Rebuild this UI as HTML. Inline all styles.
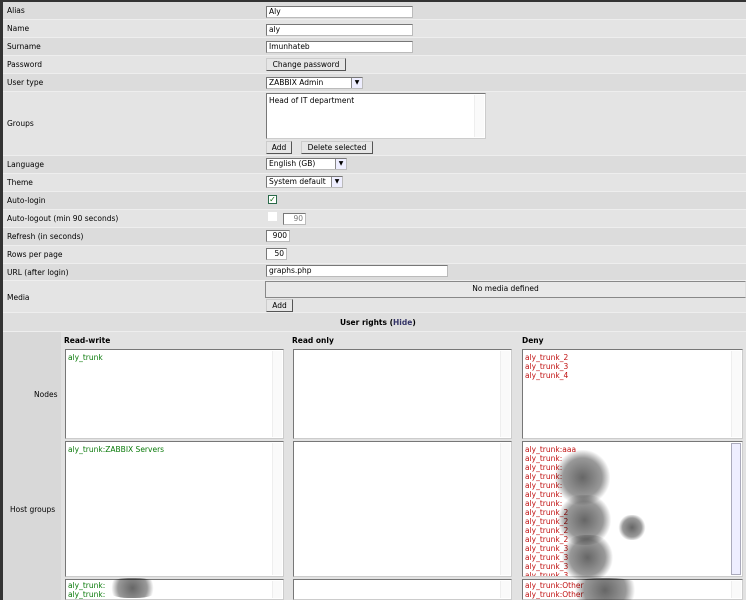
<!DOCTYPE html>
<html><head><meta charset="utf-8"><style>
*{box-sizing:border-box;margin:0;padding:0}
html,body{width:746px;height:600px;overflow:hidden}
body{background:#333;font-family:"DejaVu Sans","Liberation Sans",sans-serif;font-size:7.5px;color:#000;position:relative}
.a{position:absolute}
.row{position:absolute;left:3px;width:743px;border-bottom:1px solid #eeeeee}
.l{position:absolute;left:4px}
.in{position:absolute;background:#fff;border:1px solid #777;border-right-color:#bbb;border-bottom-color:#bbb;padding-left:2px;line-height:10px;height:12px}
.btn{position:absolute;background:#e6e6e6;border:1px solid #555;border-top-color:#ccc;border-left-color:#ccc;height:13px;line-height:11px;text-align:center}
.sel .arr{position:absolute;right:0;top:0;width:11px;height:10px;border-left:1px solid #888;background:#eef;text-align:center;font-size:6px;line-height:10px}
.box{position:absolute;background:#fff;border:1px solid #777;border-right-color:#ccc;border-bottom-color:#ccc;padding:3px 2px;line-height:9px;overflow:hidden}
.sb{position:absolute;right:1px;top:1px;bottom:1px;width:10px;background:#fafafa;border-left:1px solid #eee}
.g{color:#0a7a0a}.r{color:#c01010}
.blob{position:absolute;border-radius:45%;background:radial-gradient(circle,rgba(0,0,0,.6) 0,rgba(0,0,0,.4) 50%,rgba(0,0,0,0) 72%)}
</style></head><body>
<div class="a" style="left:3px;top:2px;width:743px;height:598px;background:#e2e2e2"></div>
<div class="row" style="top:2px;height:18px;background:#dcdcdc"><span class="l" style="top:4px">Alias</span></div>
<div class="row" style="top:20px;height:18px;background:#e4e4e4"><span class="l" style="top:4px">Name</span></div>
<div class="row" style="top:38px;height:18px;background:#dcdcdc"><span class="l" style="top:4px">Surname</span></div>
<div class="row" style="top:56px;height:18px;background:#e4e4e4"><span class="l" style="top:4px">Password</span></div>
<div class="row" style="top:74px;height:18px;background:#dcdcdc"><span class="l" style="top:4px">User type</span></div>
<div class="row" style="top:92px;height:64px;background:#e4e4e4"><span class="l" style="top:27px">Groups</span></div>
<div class="row" style="top:156px;height:18px;background:#dcdcdc"><span class="l" style="top:4px">Language</span></div>
<div class="row" style="top:174px;height:18px;background:#e4e4e4"><span class="l" style="top:4px">Theme</span></div>
<div class="row" style="top:192px;height:18px;background:#dcdcdc"><span class="l" style="top:4px">Auto-login</span></div>
<div class="row" style="top:210px;height:18px;background:#e4e4e4"><span class="l" style="top:4px">Auto-logout (min 90 seconds)</span></div>
<div class="row" style="top:228px;height:18px;background:#dcdcdc"><span class="l" style="top:4px">Refresh (in seconds)</span></div>
<div class="row" style="top:246px;height:18px;background:#e4e4e4"><span class="l" style="top:4px">Rows per page</span></div>
<div class="row" style="top:264px;height:17px;background:#dcdcdc"><span class="l" style="top:4px">URL (after login)</span></div>
<div class="row" style="top:281px;height:32px;background:#e4e4e4"><span class="l" style="top:12px">Media</span></div>
<div class="row" style="top:313px;height:19px;background:#dedede"></div>
<div class="a" style="left:3px;top:332px;width:58px;height:268px;background:#d8d8d8"></div>

<div class="in" style="left:266px;top:6px;width:147px">Aly</div>
<div class="in" style="left:266px;top:24px;width:147px">aly</div>
<div class="in" style="left:266px;top:41px;width:147px">Imunhateb</div>
<div class="btn" style="left:266px;top:58px;width:80px">Change password</div>
<div class="in sel" style="left:266px;top:77px;width:97px">ZABBIX Admin<span class="arr">&#9660;</span></div>
<div class="box" style="left:266px;top:93px;width:220px;height:46px;padding-top:2px">Head of IT department<div class="sb"></div></div>
<div class="btn" style="left:266px;top:141px;width:26px">Add</div>
<div class="btn" style="left:301px;top:141px;width:72px">Delete selected</div>
<div class="in sel" style="left:266px;top:158px;width:81px">English (GB)<span class="arr">&#9660;</span></div>
<div class="in sel" style="left:266px;top:176px;width:77px">System default<span class="arr">&#9660;</span></div>
<div class="a" style="left:268px;top:195px;width:9px;height:9px;border:1px solid #2a6a4a;background:#fff;color:#0a6a0a;font-size:8px;line-height:7px;text-align:center">&#10003;</div>
<div class="a" style="left:268px;top:212px;width:9px;height:9px;background:#fff"></div>
<div class="in" style="left:283px;top:213px;width:23px;text-align:right;padding-right:2px;color:#777">90</div>
<div class="in" style="left:266px;top:230px;width:24px;text-align:right;padding-right:2px">900</div>
<div class="in" style="left:266px;top:248px;width:21px;text-align:right;padding-right:2px">50</div>
<div class="in" style="left:266px;top:265px;width:182px">graphs.php</div>
<div class="a" style="left:265px;top:281px;width:481px;height:17px;background:#e8e8e8;border:1px solid #888;border-right-color:#ddd;text-align:center;line-height:14px">No media defined</div>
<div class="btn" style="left:266px;top:299px;width:27px">Add</div>
<div class="a" style="left:340px;top:318px;font-weight:bold">User rights (<span style="color:#336">Hide</span>)</div>

<div class="a" style="left:64px;top:336px;font-weight:bold">Read-write</div>
<div class="a" style="left:292px;top:336px;font-weight:bold">Read only</div>
<div class="a" style="left:522px;top:336px;font-weight:bold">Deny</div>
<div class="a" style="left:34px;top:390px">Nodes</div>
<div class="a" style="left:10px;top:505px">Host groups</div>

<div class="box g" style="left:65px;top:349px;width:219px;height:90px">aly_trunk<div class="sb"></div></div>
<div class="box" style="left:293px;top:349px;width:219px;height:90px"><div class="sb"></div></div>
<div class="box r" style="left:522px;top:349px;width:221px;height:90px">aly_trunk_2<br>aly_trunk_3<br>aly_trunk_4<div class="sb"></div></div>

<div class="box g" style="left:65px;top:441px;width:219px;height:136px">aly_trunk:ZABBIX Servers<div class="sb"></div></div>
<div class="box" style="left:293px;top:441px;width:219px;height:136px"><div class="sb"></div></div>
<div class="box r" style="left:522px;top:441px;width:221px;height:136px">aly_trunk:aaa<br>aly_trunk:<br>aly_trunk:<br>aly_trunk:<br>aly_trunk:<br>aly_trunk:<br>aly_trunk:<br>aly_trunk_2<br>aly_trunk_2<br>aly_trunk_2<br>aly_trunk_2<br>aly_trunk_3<br>aly_trunk_3<br>aly_trunk_3<br>aly_trunk_3<div class="sb" style="background:#eef;border:1px solid #aab"></div></div>

<div class="box g" style="left:65px;top:579px;width:219px;height:21px;padding-top:1px">aly_trunk:<br>aly_trunk:<div class="sb"></div></div>
<div class="box" style="left:293px;top:579px;width:219px;height:21px"><div class="sb"></div></div>
<div class="box r" style="left:522px;top:579px;width:221px;height:21px;padding-top:1px">aly_trunk:Other<br>aly_trunk:Other<div class="sb"></div></div>

<div class="blob" style="left:555px;top:450px;width:55px;height:55px"></div>
<div class="blob" style="left:557px;top:495px;width:55px;height:50px"></div>
<div class="blob" style="left:560px;top:535px;width:55px;height:45px"></div>
<div class="blob" style="left:618px;top:515px;width:28px;height:25px"></div>
<div class="blob" style="left:565px;top:578px;width:80px;height:24px"></div>
<div class="blob" style="left:105px;top:578px;width:55px;height:20px"></div>
</body></html>
